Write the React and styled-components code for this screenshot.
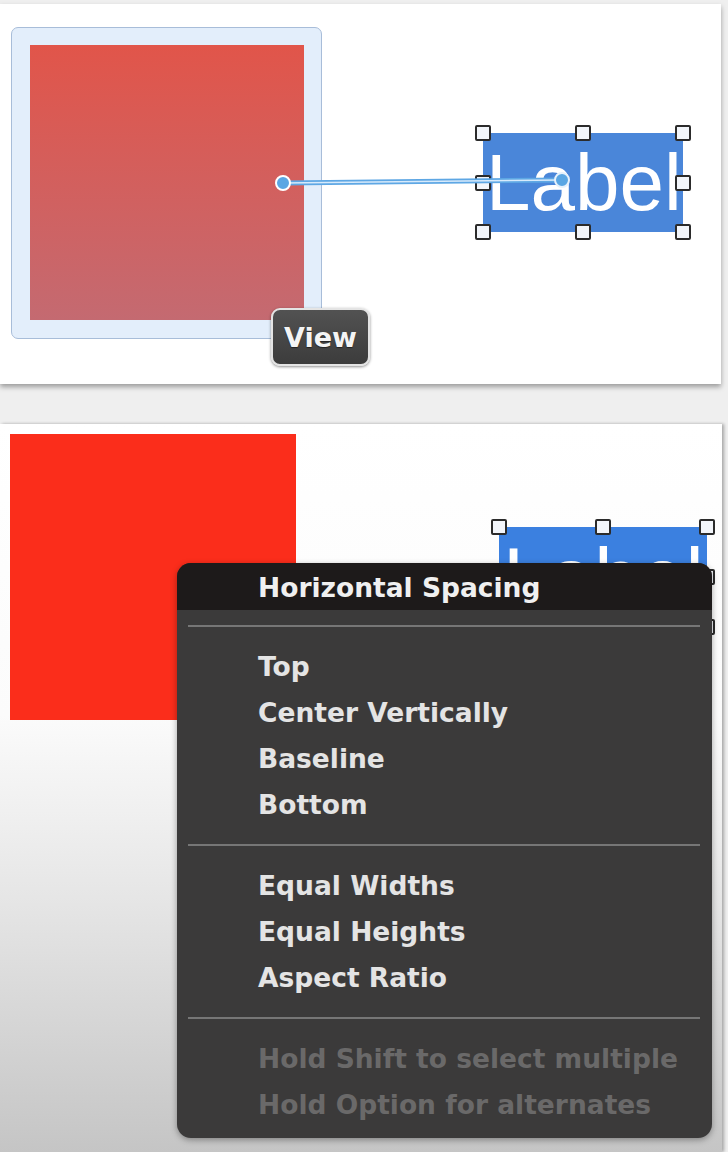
import React from "react";
import styled, { createGlobalStyle } from "styled-components";

const GlobalStyle = createGlobalStyle`
  html, body {
    margin: 0;
    padding: 0;
    background: #efefef;
  }
  * {
    box-sizing: border-box;
  }
`;

const Page = styled.div`
  display: flex;
  flex-direction: column;
  gap: 40px;
  width: 728px;
  height: 1152px;
  padding-top: 4px;
  overflow: hidden;
  background: #efefef;
  font-family: "DejaVu Sans", "Liberation Sans", sans-serif;
`;

const TopPanel = styled.div`
  position: relative;
  width: 721px;
  height: 380px;
  flex-shrink: 0;
  background: #ffffff;
  box-shadow: 0 3px 5px rgba(0, 0, 0, 0.35);
`;

const BottomPanel = styled.div`
  position: relative;
  width: 722px;
  flex: 1;
  background: linear-gradient(
    to bottom,
    #ffffff 0%,
    #fbfbfb 40%,
    #e6e6e6 65%,
    #c5c5c5 100%
  );
  box-shadow: 2px 0 3px rgba(0, 0, 0, 0.3);
`;

// selected view in the top canvas
const SelectionFrame = styled.div`
  position: absolute;
  left: 11px;
  top: 23px;
  width: 311px;
  height: 312px;
  display: flex;
  padding: 17px 17px 18px 18px;
  background: #e3eefb;
  border: 1px solid #a8bdd9;
  border-radius: 7px;
`;

const GradientView = styled.div`
  flex: 1;
  background: linear-gradient(to bottom, #e1554a, #c46a71);
`;

const FlatView = styled.div`
  position: absolute;
  left: 10px;
  top: 10px;
  width: 286px;
  height: 286px;
  background: #fb2d1b;
`;

const LabelBox = styled.div`
  position: absolute;
  left: ${(p) => p.$x}px;
  top: ${(p) => p.$y}px;
  width: ${(p) => p.$w}px;
  height: ${(p) => p.$h}px;
  background: ${(p) => p.$bg};
`;

const LabelText = styled.div`
  height: 100%;
  padding-left: ${(p) => p.$indent}px;
  font-family: "Liberation Sans", Arial, sans-serif;
  font-size: ${(p) => p.$size}px;
  line-height: ${(p) => p.$lh}px;
  color: #ffffff;
  white-space: nowrap;
  overflow: hidden;
`;

const hPos = { l: "0%", c: "50%", r: "100%" };
const vPos = { t: "0%", m: "50%", b: "100%" };

const Handle = styled.span`
  position: absolute;
  left: ${(p) => hPos[p.$h]};
  top: ${(p) => vPos[p.$v]};
  width: 16px;
  height: 16px;
  margin: -8px 0 0 -8px;
  background: #f2f5fa;
  border: 2px solid #2b2b2b;
  border-radius: 2px;
`;

const Wire = styled.svg`
  position: absolute;
  left: 0;
  top: 0;
  width: 100%;
  height: 100%;
  pointer-events: none;
`;

const ViewTag = styled.div`
  position: absolute;
  left: 271px;
  top: 304px;
  width: 99px;
  height: 58px;
  display: flex;
  align-items: center;
  justify-content: center;
  background: linear-gradient(to bottom, #525252, #3c3c3c);
  border: 2px solid #e4e4e4;
  border-radius: 9px;
  box-shadow: 0 1px 3px rgba(0, 0, 0, 0.45);
  color: #f4f4f4;
  font-size: 27px;
  font-weight: bold;
  text-shadow: 0 1px 1px rgba(0, 0, 0, 0.5);
`;

const Menu = styled.div`
  position: absolute;
  left: 177px;
  top: 139px;
  width: 535px;
  height: 575px;
  display: flex;
  flex-direction: column;
  background: #3b3a3a;
  border-radius: 14px;
  overflow: hidden;
  box-shadow: 0 2px 6px rgba(0, 0, 0, 0.35);
  font-family: "DejaVu Sans", "Liberation Sans", sans-serif;
  font-weight: bold;
  font-size: 26.5px;
`;

const MenuHeader = styled.div`
  height: 47px;
  padding: 1px 0 0 81px;
  line-height: 47px;
  background: #1d1a1a;
  color: #f0f0f0;
`;

const Separator = styled.div`
  height: 2px;
  margin: ${(p) => p.$top}px 12px 17px 11px;
  background: #767676;
`;

const MenuItem = styled.div`
  height: 46px;
  padding-left: 81px;
  line-height: 46px;
  color: ${(p) => (p.$disabled ? "#6a6969" : "#e4e4e4")};
  white-space: nowrap;
`;

const groups = [
  ["Top", "Center Vertically", "Baseline", "Bottom"],
  ["Equal Widths", "Equal Heights", "Aspect Ratio"],
];

const hints = ["Hold Shift to select multiple", "Hold Option for alternates"];

function Handles() {
  return (
    <>
      <Handle $h="l" $v="t" />
      <Handle $h="c" $v="t" />
      <Handle $h="r" $v="t" />
      <Handle $h="l" $v="m" />
      <Handle $h="r" $v="m" />
      <Handle $h="l" $v="b" />
      <Handle $h="c" $v="b" />
      <Handle $h="r" $v="b" />
    </>
  );
}

export default function App() {
  return (
    <>
      <GlobalStyle />
      <Page>
        <TopPanel>
          <SelectionFrame>
            <GradientView />
          </SelectionFrame>
          <LabelBox $x={483} $y={129} $w={200} $h={99} $bg="#4a86d9">
            <LabelText $size={80} $indent={3} $lh={99}>
              Label
            </LabelText>
            <Handles />
          </LabelBox>
          <Wire viewBox="0 0 721 380">
            <line x1="283" y1="179" x2="562" y2="176" stroke="#5ea7e4" strokeWidth="5" strokeLinecap="round" />
            <line x1="283" y1="179" x2="562" y2="176" stroke="#d7eafb" strokeWidth="1.5" />
            <circle cx="283" cy="179" r="7" fill="#5aa6e3" stroke="#ffffff" strokeWidth="2" />
            <circle cx="562" cy="176" r="7" fill="#5aa6e3" stroke="#e6f1fb" strokeWidth="2" />
          </Wire>
          <ViewTag>View</ViewTag>
        </TopPanel>

        <BottomPanel>
          <FlatView />
          <LabelBox $x={499} $y={103} $w={208} $h={100} $bg="#3b80e0">
            <LabelText $size={82} $indent={4} $lh={100}>
              Label
            </LabelText>
            <Handles />
          </LabelBox>
          <Menu>
            <MenuHeader>Horizontal Spacing</MenuHeader>
            <Separator $top={15} />
            {groups[0].map((item) => (
              <MenuItem key={item}>{item}</MenuItem>
            ))}
            <Separator $top={16} />
            {groups[1].map((item) => (
              <MenuItem key={item}>{item}</MenuItem>
            ))}
            <Separator $top={16} />
            {hints.map((item) => (
              <MenuItem key={item} $disabled>
                {item}
              </MenuItem>
            ))}
          </Menu>
        </BottomPanel>
      </Page>
    </>
  );
}
